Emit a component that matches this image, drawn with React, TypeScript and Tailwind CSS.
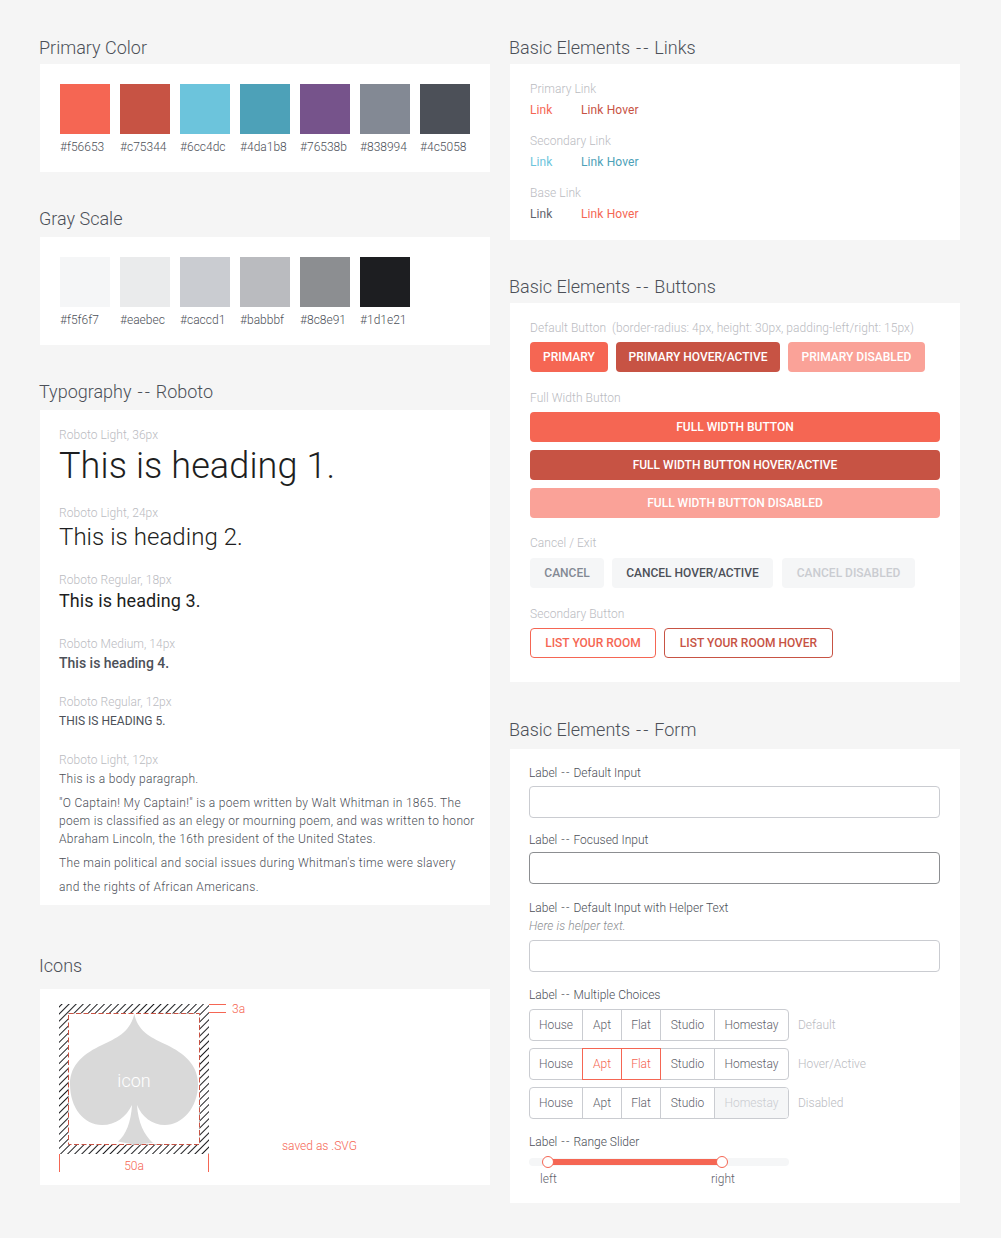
const font = { fontFamily: "Roboto, 'Liberation Sans', sans-serif" };

const primary = ["#f56653", "#c75344", "#6cc4dc", "#4da1b8", "#76538b", "#838994", "#4c5058"];
const grays = ["#f5f6f7", "#eaebec", "#caccd1", "#babbbf", "#8c8e91", "#1d1e21"];

// the reference keeps the two hyphens apart
function Dash() {
  return <span className="mx-[0.08em]"><span className="tracking-[0.12em]">-</span>-</span>;
}

function Title({ children, className = "" }: { children: React.ReactNode; className?: string }) {
  return <h2 className={`-ml-px h-6 text-[18px] leading-[26px] font-light text-[#4c5058] ${className}`}>{children}</h2>;
}

function Swatches({ colors }: { colors: string[] }) {
  return (
    <div className="flex gap-[10px] bg-white px-5 pt-5 pb-[17px]">
      {colors.map((c) => (
        <div key={c} className="w-[50px]">
          <div className="h-[50px] w-[50px]" style={{ backgroundColor: c }} />
          <div className="mt-[3px] h-[18px] text-xs leading-5 font-light whitespace-nowrap text-[#4c5058]">{c}</div>
        </div>
      ))}
    </div>
  );
}

function Note({ children, className = "" }: { children: React.ReactNode; className?: string }) {
  return <div className={`h-[18px] text-xs leading-5 font-light tracking-[0.05px] text-[#babbbf] ${className}`}>{children}</div>;
}

function LinkRow({ label, first, second, className = "" }: { label: string; first: string; second: string; className?: string }) {
  return (
    <div className={className}>
      <Note>{label}</Note>
      <div className="mt-[2px] flex h-5 text-xs leading-[22px] font-[380] tracking-[0.12px]">
        <span className="w-[51px]" style={{ color: first }}>Link</span>
        <span style={{ color: second }}>Link Hover</span>
      </div>
    </div>
  );
}

function Btn({ children, className = "" }: { children: React.ReactNode; className?: string }) {
  return (
    <div className={`flex h-[30px] items-center justify-center rounded text-xs font-[465] whitespace-nowrap ${className}`}>
      {children}
    </div>
  );
}

function Label({ children, className = "" }: { children: React.ReactNode; className?: string }) {
  return <div className={`text-xs leading-[18px] font-[350] text-[#4c5058] ${className}`}>{children}</div>;
}

function Input({ className = "", focused }: { className?: string; focused?: boolean }) {
  return <div className={`h-8 rounded border bg-white ${focused ? "border-[#8c8e91]" : "border-[#caccd1]"} ${className}`} />;
}

const cells = [
  { name: "House", w: "w-[52px]" },
  { name: "Apt", w: "w-[39px]" },
  { name: "Flat", w: "w-[39px]" },
  { name: "Studio", w: "w-[54px]" },
  { name: "Homestay", w: "w-[74px]" },
];

function Choices({ note, active = [], disabled }: { note: string; active?: string[]; disabled?: string }) {
  return (
    <div className="flex items-center">
      <div className="flex h-8 w-[260px] rounded border border-[#caccd1]">
        {cells.map((c, i) => {
          const on = active.includes(c.name);
          const off = disabled === c.name;
          return (
            <div
              key={c.name}
              className={`flex flex-none items-center justify-center text-xs font-light ${c.w} ${i > 0 ? "border-l" : ""} ${
                on
                  ? "relative z-10 -my-px -mr-px h-8 min-w-[40px] border border-[#f56653] text-[#f56653]"
                  : off
                    ? "rounded-r-[3px] border-[#caccd1] bg-[#f5f6f7] text-[#caccd1]"
                    : "border-[#caccd1] text-[#5f636c]"
              }`}
            >
              {c.name}
            </div>
          );
        })}
      </div>
      <div className="ml-[9px] text-xs font-light text-[#babbbf]">{note}</div>
    </div>
  );
}

function IconDiagram() {
  return (
    <svg width="330" height="195" viewBox="0 0 330 195" className="block">
      <defs>
        <pattern id="hatch" width="5" height="5" patternUnits="userSpaceOnUse" patternTransform="rotate(45)">
          <line x1="0.500" y1="0" x2="0.500" y2="5" stroke="#1d1e21" strokeWidth="1" />
        </pattern>
      </defs>
      <path
        fillRule="evenodd"
        fill="url(#hatch)"
        d="M19 14H169V164H19Z M28.500 23.500V154.500H159.500V23.500Z"
      />
      <rect x="28.500" y="23.500" width="131" height="131" fill="none" stroke="#c75344" strokeDasharray="5 2.500" />
      <path
        fill="#d9d9d9"
        d="M94.300 24C98 42 112 48 127 55C143 63 158 74 158 94C158 118 142 135 125 135C112 135 102 127 97 115C98 132 104 145 113 153L94 154.500L78 151.500C86 145 91 132 92 115C86 127 76 135 62 135C44 135 30 118 30 94C30 74 45 63 62 55C77 48 90 42 94.300 24Z"
      />
      <text x="94" y="97" textAnchor="middle" fontSize="18" fontWeight="300" fill="#fff">icon</text>
      <g stroke="#f56653" fill="none">
        <path d="M169 14.500H186M169 22.500H186M19.500 164V182M168.500 164V182" />
      </g>
      <g fontSize="12" fontWeight="300" fill="#f56653">
        <text x="192" y="23">3a</text>
        <text x="94" y="180" textAnchor="middle">50a</text>
        <text x="242" y="160">saved as .SVG</text>
      </g>
    </svg>
  );
}

export default function App() {
  return (
    <div className="flex h-[1238px] gap-5 overflow-hidden bg-[#f5f5f5] pt-[35px] pl-10 [font-variant-ligatures:none]" style={font}>
      <div className="w-[450px]">
        <Title className="mb-[5px]">Primary Color</Title>
        <Swatches colors={primary} />
        <Title className="mt-[34px] mb-[7px]">Gray Scale</Title>
        <Swatches colors={grays} />
        <Title className="mt-[34px] mb-[7px]">Typography <Dash /> Roboto</Title>
        <div className="bg-white pt-[15px] pr-[15px] pb-[6px] pl-[19px] text-[#4c5058]">
          <Note>Roboto Light, 36px</Note>
          <div className="h-[44px] text-[36px] leading-[46px] font-light tracking-[0.1px] text-[#1d1e21]">This is heading 1.</div>
          <Note className="mt-4">Roboto Light, 24px</Note>
          <div className="h-[30px] text-2xl leading-8 font-light tracking-[0.05px] text-[#1d1e21]">This is heading 2.</div>
          <Note className="mt-[19px]">Roboto Regular, 18px</Note>
          <div className="h-6 text-[18px] leading-[26px] tracking-[0.08px] text-[#1d1e21]">This is heading 3.</div>
          <Note className="mt-[22px]">Roboto Medium, 14px</Note>
          <div className="text-sm leading-[22px] font-medium text-[#4c5058]">This is heading 4.</div>
          <Note className="mt-[18px]">Roboto Regular, 12px</Note>
          <div className="h-5 text-xs leading-[22px] text-[#4c5058]">THIS IS HEADING 5.</div>
          <Note className="mt-5">Roboto Light, 12px</Note>
          <p className="h-5 text-xs leading-[22px] font-light tracking-[0.32px]">This is a body paragraph.</p>
          <p className="mt-[6px] text-xs leading-[18px] font-light tracking-[0.32px]">
            "O Captain! My Captain!" is a poem written by Walt Whitman in 1865. The poem is classified as an elegy or mourning poem, and was written to honor Abraham Lincoln, the 16th president of the United States.
          </p>
          <p className="mt-[3px] text-xs leading-6 font-light tracking-[0.32px]">
            The main political and social issues during Whitman's time were slavery and the rights of African Americans.
          </p>
        </div>
        <Title className="mt-12 mb-3">Icons</Title>
        <div className="h-[196px] bg-white pt-px">
          <IconDiagram />
        </div>
      </div>

      <div className="w-[450px]">
        <Title className="mb-[5px]">Basic Elements <Dash /> Links</Title>
        <div className="bg-white px-5 pt-[15px] pb-[17px]">
          <LinkRow label="Primary Link" first="#f56653" second="#c75344" />
          <LinkRow label="Secondary Link" first="#6cc4dc" second="#4da1b8" className="mt-3" />
          <LinkRow label="Base Link" first="#5f636c" second="#f56653" className="mt-3" />
        </div>

        <Title className="mt-[34px] mb-[5px]">Basic Elements <Dash /> Buttons</Title>
        <div className="bg-white px-5 pt-[15px] pb-6">
          <Note>Default Button&nbsp; (border-radius: 4px, height: 30px, padding-left/right: 15px)</Note>
          <div className="mt-[6px] flex gap-2 text-white">
            <Btn className="w-[78px] bg-[#f56653]">PRIMARY</Btn>
            <Btn className="w-[164px] bg-[#c75344]">PRIMARY HOVER/ACTIVE</Btn>
            <Btn className="w-[137px] bg-[#faa298]">PRIMARY DISABLED</Btn>
          </div>
          <Note className="mt-4">Full Width Button</Note>
          <div className="mt-[6px] flex flex-col gap-2 text-white">
            <Btn className="bg-[#f56653]">FULL WIDTH BUTTON</Btn>
            <Btn className="bg-[#c75344]">FULL WIDTH BUTTON HOVER/ACTIVE</Btn>
            <Btn className="bg-[#faa298]">FULL WIDTH BUTTON DISABLED</Btn>
          </div>
          <Note className="mt-[15px]">Cancel / Exit</Note>
          <div className="mt-[7px] flex gap-2">
            <Btn className="w-[74px] bg-[#f5f6f7] text-[#838994]">CANCEL</Btn>
            <Btn className="w-[161px] bg-[#f5f6f7] text-[#4c5058]">CANCEL HOVER/ACTIVE</Btn>
            <Btn className="ml-px w-[133px] bg-[#f5f6f7] text-[#caccd1]">CANCEL DISABLED</Btn>
          </div>
          <Note className="mt-4">Secondary Button</Note>
          <div className="mt-[6px] flex gap-2">
            <Btn className="w-[126px] border border-[#f56653] text-[#f56653]">LIST YOUR ROOM</Btn>
            <Btn className="w-[169px] border border-[#c75344] text-[#c75344]">LIST YOUR ROOM HOVER</Btn>
          </div>
        </div>

        <Title className="mt-[35px] mb-2">Basic Elements <Dash /> Form</Title>
        <div className="h-[454px] bg-white pt-[15px] pr-5 pl-[19px]">
          <Label>Label <Dash /> Default Input</Label>
          <Input className="mt-1" />
          <Label className="mt-[13px]">Label <Dash /> Focused Input</Label>
          <Input className="mt-[3px]" focused />
          <Label className="mt-[15px]">Label <Dash /> Default Input with Helper Text</Label>
          <div className="text-xs leading-[18px] font-light tracking-[0.1px] text-[#8c8e91] italic">Here is helper text.</div>
          <Input className="mt-[5px]" />
          <Label className="mt-[14px]">Label <Dash /> Multiple Choices</Label>
          <div className="mt-[5px] flex flex-col gap-[7px]">
            <Choices note="Default" />
            <Choices note="Hover/Active" active={["Apt", "Flat"]} />
            <Choices note="Disabled" disabled="Homestay" />
          </div>
          <Label className="mt-[14px]">Label <Dash /> Range Slider</Label>
          <div className="relative mt-[7px] h-2 w-[260px] rounded-full bg-[#f5f6f7]">
            <div className="absolute top-[1px] left-[19px] h-[6px] w-[174px] bg-[#f56653]" />
            <div className="absolute top-[-2px] left-[13px] h-3 w-3 rounded-full border border-[#f56653] bg-white" />
            <div className="absolute top-[-2px] left-[187px] h-3 w-3 rounded-full border border-[#f56653] bg-white" />
          </div>
          <div className="mt-1 flex w-[260px] text-xs leading-[18px] font-light text-[#5f636c]">
            <span className="ml-[11px] w-[171px]">left</span>
            <span>right</span>
          </div>
        </div>
      </div>
    </div>
  );
}
